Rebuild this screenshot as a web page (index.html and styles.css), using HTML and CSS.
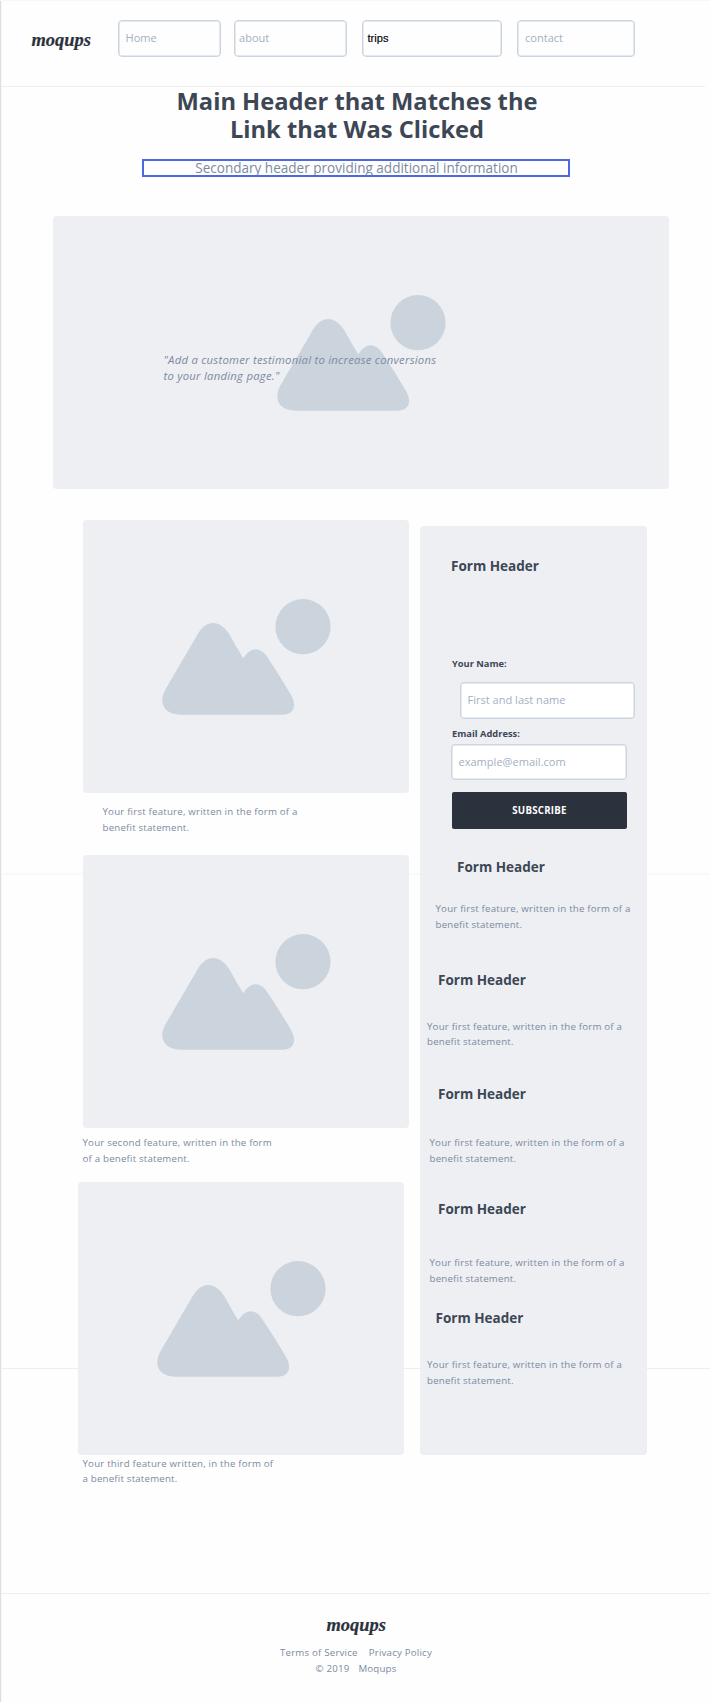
FILE: index.html
```html
<!DOCTYPE html>
<html lang="en">
<head>
<meta charset="utf-8">
<title>Moqups</title>
<link rel="stylesheet" href="styles.css">
</head>
<body>
<svg class="defs" width="0" height="0">
  <symbol id="picture" viewBox="0 0 169 116">
    <path d="M35.2 36 C44 20 58 20 67.8 36 Q74 47.500 81.200 59.300 C89 47.500 98 47.500 105.200 58 Q118 77 129.200 96.300 C135 107 132 115.700 120.200 115.700 H18.500 C2 115.700 -4 104 3.500 90.300 Z"/>
    <circle cx="141" cy="27.700" r="27.600"/>
  </symbol>
</svg>
<div class="page">
  <header class="top">
    <svg class="logo" viewBox="0 0 64 28"><text x="2.500" y="18.200" textLength="59.500" lengthAdjust="spacingAndGlyphs">moqups</text></svg>
    <nav class="nav">
      <a class="field nav-home">Home</a>
      <a class="field nav-about">about</a>
      <a class="field nav-trips">trips</a>
      <a class="field nav-contact">contact</a>
    </nav>
  </header>
  <main>
    <h1>Main Header that Matches the<br>Link that Was Clicked</h1>
    <div class="subtitle"><span>Secondary header providing additional information</span></div>
    <section class="hero">
      <svg class="picture"><use href="#picture"/></svg>
      <p class="quote">"Add a customer testimonial to increase conversions<br>to your landing page."</p>
    </section>
    <div class="columns">
      <section class="features">
        <div class="card"><svg class="picture"><use href="#picture"/></svg></div>
        <p class="copy cap-first">Your first feature, written in the form of a<br>benefit statement.</p>
        <div class="card card-second"><svg class="picture"><use href="#picture"/></svg></div>
        <p class="copy cap-second">Your second feature, written in the form<br>of a benefit statement.</p>
        <div class="card card-third"><svg class="picture"><use href="#picture"/></svg></div>
        <p class="copy cap-third">Your third feature written, in the form of<br>a benefit statement.</p>
      </section>
      <aside class="panel">
        <h2>Form Header</h2>
        <label class="label-name">Your Name:</label>
        <div class="field input-name">First and last name</div>
        <label class="label-email">Email Address:</label>
        <div class="field input-email">example@email.com</div>
        <div class="button">SUBSCRIBE</div>
        <h2 class="head-a">Form Header</h2>
        <p class="copy text-a">Your first feature, written in the form of a<br>benefit statement.</p>
        <h2 class="head-b">Form Header</h2>
        <p class="copy text-b">Your first feature, written in the form of a<br>benefit statement.</p>
        <h2 class="head-c">Form Header</h2>
        <p class="copy text-c">Your first feature, written in the form of a<br>benefit statement.</p>
        <h2 class="head-d">Form Header</h2>
        <p class="copy text-d">Your first feature, written in the form of a<br>benefit statement.</p>
        <h2 class="head-e">Form Header</h2>
        <p class="copy text-e">Your first feature, written in the form of a<br>benefit statement.</p>
      </aside>
    </div>
  </main>
  <footer>
    <svg class="logo" viewBox="0 0 64 28"><text x="2.500" y="18.200" textLength="59.500" lengthAdjust="spacingAndGlyphs">moqups</text></svg>
    <div class="links"><a>Terms of Service</a><a>Privacy Policy</a></div>
    <div class="legal"><span>© 2019</span><span>Moqups</span></div>
  </footer>
</div>
</body>
</html>
```
FILE: styles.css
```css
* { box-sizing: border-box; }
body { margin: 0; background: #fefefe; font-family: "Open Sans", "Noto Sans", sans-serif; color: #3d4655; }
h1, h2, p { margin: 0; }
.defs { display: block; height: 0; }
.page {
  width: 710px; height: 1702px; overflow: hidden;
  border-top: 1px solid #f7f7f7;
  box-shadow: inset 1px 0 #dedede, inset 2px 0 #f7f7f7;
  background:
    linear-gradient(#f9f9f9, #f9f9f9) 2px 872px / 708px 2px no-repeat,
    linear-gradient(#eeeeee, #eeeeee) 2px 1367px / 708px 1px no-repeat;
}

/* Header */
.top { display: flex; height: 86px; margin: 0 5px 0 2px; padding: 19px 0 0 27px; border-bottom: 1px solid #ededee; }
.logo { display: block; flex: none; width: 64px; height: 28px; fill: #2b313d; stroke: #2b313d; stroke-width: .2px; font: italic bold 18.500px "Liberation Serif", serif; }
.top .logo { margin-top: 8px; }
.nav { display: flex; margin-left: 25px; }
.field { display: flex; align-items: center; height: 37px; border: 1px solid #cbd5df; box-shadow: inset 0 0 0 .5px #cbd5df; border-radius: 4px; background: #fff; color: #a3b0c4; font-size: 11.050px; padding: 0 0 2px 6.500px; }
.nav .field { background: #fefefe; }
.nav-home { width: 103px; }
.nav-about { width: 113px; margin-left: 13px; padding-left: 4px; }
.nav .nav-trips { width: 140px; margin-left: 15px; padding-left: 4.500px; color: #000; font: 11.200px "Liberation Sans", sans-serif; -webkit-text-stroke: .15px #000; }
.nav-contact { width: 118px; margin-left: 15px; padding-left: 7px; }

/* Intro */
h1 { padding-left: 4px; text-align: center; font-size: 23.700px; line-height: 28px; }
.subtitle { display: flex; justify-content: center; width: 428px; height: 18px; margin: 16px 0 0 142px; padding-left: 1px; border: 2px solid #4d69dd; overflow: hidden; font-size: 13.560px; line-height: 14px; color: #7c8ba1; }
.subtitle span { white-space: nowrap; }
.hero { display: grid; place-items: center; width: 616px; height: 273px; margin: 39px 0 0 53px; border-radius: 4px; background: #edeff3; }
.hero > * { grid-area: 1 / 1; }
.picture { display: block; width: 169px; height: 116px; fill: #cbd3dd; }
.quote { justify-self: start; margin: 30px 0 0 110.500px; font-size: 11.300px; letter-spacing: .25px; line-height: 16px; font-style: italic; color: #7c8aa2; }

/* Columns */
.columns { display: flex; align-items: flex-start; margin: 30px 0 0 77px; }
.features { width: 342px; height: 1019px; margin: 1px 0 0 1px; }
.card { display: grid; place-items: center; width: 326px; height: 273px; margin-left: 5px; border-radius: 4px; background: #edeff3; }
.copy { height: 31px; font-size: 9.700px; letter-spacing: .2px; line-height: 15.700px; color: #7c8aa1; white-space: nowrap; }
.cap-first { margin: 11px 0 0 24.500px; }
.card-second { margin-top: 20px; }
.cap-second { margin: 7px 0 0 4.500px; }
.card-third { margin: 16px 0 0; }
.cap-third { margin: 1px 0 0 4.500px; line-height: 15px; }

.panel { width: 227px; height: 929px; margin-top: 7px; padding: 30px 0 0; border-radius: 4px; background: #edeff3; }
h2 { margin-left: 31px; font-size: 13.520px; line-height: 20px; }
label { display: block; margin-left: 32px; font-size: 9.300px; line-height: 14px; font-weight: 700; }
.label-name { margin-top: 81px; }
.label-email { margin-top: 8px; }
.input-name { width: 175px; margin: 11px 0 0 40px; }
.input-email { width: 176px; height: 36px; margin: 3px 0 0 31px; padding-bottom: 1px; }
.button { width: 175px; height: 37px; margin: 12px 0 0 32px; border-radius: 2px; background: #2b313d; color: #fff; text-align: center; font-size: 9.700px; letter-spacing: .25px; font-weight: 700; line-height: 37px; }
.head-a { margin: 28px 0 0 37px; }
.text-a { margin: 24px 0 0 15.500px; }
.head-b { margin: 38px 0 0 18px; }
.text-b { margin: 29px 0 0 7px; line-height: 15px; }
.head-c { margin: 34px 0 0 18px; }
.text-c { margin: 31px 0 0 9.500px; }
.head-d { margin: 33px 0 0 18px; }
.text-d { margin: 36px 0 0 9.500px; }
.head-e { margin: 22px 0 0 15.500px; }
.text-e { margin: 29px 0 0 7px; }

/* Footer */
footer { display: flex; flex-direction: column; align-items: center; margin: 54px 0 0 2px; padding-top: 19px; border-top: 1px solid #ededee; color: #7c8aa1; font-size: 9.700px; letter-spacing: .2px; line-height: 16px; }
footer .logo { letter-spacing: normal; }
.links { display: flex; gap: 11px; margin-top: 4px; }
.legal { display: flex; gap: 9px; }
```
